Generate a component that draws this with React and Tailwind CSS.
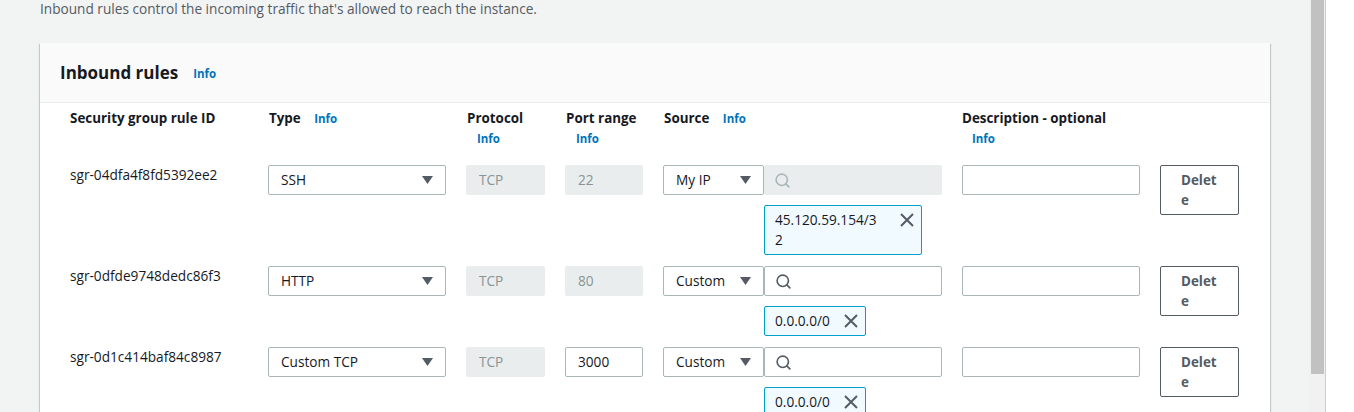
import { Search } from 'lucide-react';

const font = { fontFamily: '"Open Sans", "Liberation Sans", sans-serif' };

function Info({ className = '' }) {
  return <span className={`text-[11.5px] font-bold text-[#0073bb] ${className}`}>Info</span>;
}

function Caret() {
  return (
    <svg width="11" height="8" viewBox="0 0 11 8" className="shrink-0">
      <path d="M0 0h11L5.5 8z" fill="#545b64" />
    </svg>
  );
}

function Cross() {
  return (
    <svg width="14" height="14" viewBox="0 0 14 14" className="shrink-0">
      <path d="M1 1l12 12M13 1L1 13" stroke="#545b64" strokeWidth="2" fill="none" />
    </svg>
  );
}

function Select({ value, className = '' }) {
  return (
    <div className={`h-[30px] flex items-center justify-between pl-[12px] pr-[12px] bg-white border border-[#aab7b8] rounded-[2px] text-[13.65px] text-[#16191f] ${className}`}>
      <span>{value}</span>
      <Caret />
    </div>
  );
}

function Box({ value, disabled }) {
  return (
    <div
      className={
        disabled
          ? 'h-[30px] flex items-center pl-[12px] bg-[#eaeded] border border-[#eaeded] rounded-[2px] text-[13.65px] text-[#879596]'
          : 'h-[30px] flex items-center pl-[12px] bg-white border border-[#aab7b8] rounded-[2px] text-[13.65px] text-[#16191f]'
      }
    >
      {value}
    </div>
  );
}

function Tag({ lines }) {
  const multi = lines.length > 1;
  return (
    <div
      className={`flex justify-between ${multi ? 'items-start w-[158px]' : 'items-center w-[102px]'} bg-[#f1faff] border border-[#00a1c9] rounded-[2px] pl-[10px] pr-[7px] py-[4px] text-[13.65px] leading-5 text-[#16191f]`}
    >
      <span>
        {lines.map((l, i) => (
          <span key={i} className="block">{l}</span>
        ))}
      </span>
      <span className={multi ? 'mt-[3px]' : ''}>
        <Cross />
      </span>
    </div>
  );
}

function Row({ id, type, port, portDisabled, source, searchDisabled, tag }) {
  return (
    <div className="grid grid-cols-[178px_178px_79px_78px_279px_178px_79px] gap-x-[20px] pb-[11px]">
      <div className="text-[13.65px] leading-5 text-[#16191f]">{id}</div>
      <div><Select value={type} /></div>
      <div><Box value="TCP" disabled /></div>
      <div><Box value={port} disabled={portDisabled} /></div>
      <div>
        <div className="flex">
          <Select value={source} className="w-[101px]" />
          <div
            className={
              searchDisabled
                ? 'h-[30px] w-[178px] flex items-center pl-[10px] bg-[#eaeded] rounded-[2px]'
                : 'h-[30px] w-[178px] flex items-center pl-[10px] bg-white border border-[#aab7b8] rounded-[2px]'
            }
          >
            <Search size={17} strokeWidth={2.3} color={searchDisabled ? '#aab7b8' : '#545b64'} />
          </div>
        </div>
        <div className="ml-[101px] mt-[10px]">
          <Tag lines={tag} />
        </div>
      </div>
      <div>
        <div className="h-[30px] bg-white border border-[#aab7b8] rounded-[2px]" />
      </div>
      <div>
        <div className="w-[79px] h-[50px] border border-[#545b64] rounded-[2px] bg-white pl-[20px] pt-[4px] text-[13.4px] leading-5 font-bold text-[#545b64]">
          Delet
          <br />e
        </div>
      </div>
    </div>
  );
}

export default function App() {
  return (
    <div className="w-[1354px] h-[412px] overflow-hidden flex bg-white" style={font}>
      <div className="w-[1309px] h-full bg-[#f2f3f3] pl-[40px] pr-[39px] shrink-0">
        <p className="text-[13.65px] leading-[18px] text-[#545b64]">
          Inbound rules control the incoming traffic that's allowed to reach the instance.
        </p>
        <div className="mt-[25px] bg-white h-[400px] shadow-[0_1px_1px_0_rgba(0,28,36,0.3),1px_1px_1px_0_rgba(0,28,36,0.15),-1px_1px_1px_0_rgba(0,28,36,0.15)]">
          <div className="h-[60px] bg-[#fafafa] border-b border-[#eaeded] flex items-center pl-[20px]">
            <h2 className="text-[17px] font-bold text-[#16191f]">Inbound rules</h2>
            <Info className="ml-[15px] mt-[2px]" />
          </div>
          <div className="pl-[30px] pt-[5px]">
            <div className="grid grid-cols-[178px_178px_79px_78px_279px_178px_79px] gap-x-[20px] text-[13.4px] leading-5 font-bold text-[#16191f] h-[57px]">
              <div>Security group rule ID</div>
              <div className="pl-px">
                Type <Info className="ml-[10px]" />
              </div>
              <div className="pl-px">
                Protocol
                <br />
                <Info className="ml-[10px]" />
              </div>
              <div className="pl-px">
                Port range
                <br />
                <Info className="ml-[10px]" />
              </div>
              <div className="pl-px">
                Source <Info className="ml-[10px]" />
              </div>
              <div>
                Description - optional
                <br />
                <Info className="ml-[10px]" />
              </div>
              <div />
            </div>
            <Row id="sgr-04dfa4f8fd5392ee2" type="SSH" port="22" portDisabled source="My IP" searchDisabled tag={['45.120.59.154/3', '2']} />
            <Row id="sgr-0dfde9748dedc86f3" type="HTTP" port="80" portDisabled source="Custom" tag={['0.0.0.0/0']} />
            <Row id="sgr-0d1c414baf84c8987" type="Custom TCP" port="3000" source="Custom" tag={['0.0.0.0/0']} />
          </div>
        </div>
      </div>
      <div className="w-[16px] h-full bg-[#f1f1f1] shrink-0 pl-[2px] pr-[1px]">
        <div className="h-[374px] bg-[#c1c1c1]" />
      </div>
      <div className="w-px h-full bg-[#cccccc] shrink-0" />
      <div className="flex-1 h-full bg-white" />
    </div>
  );
}
